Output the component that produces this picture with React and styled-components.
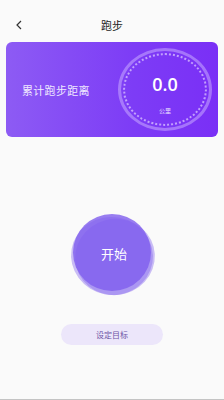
import React from 'react';
import styled, { createGlobalStyle } from 'styled-components';

const GlobalStyle = createGlobalStyle`
  html, body {
    margin: 0;
    padding: 0;
    background: #fafafa;
    font-family: "Noto Sans CJK SC", "Noto Sans", sans-serif;
  }
`;

const Page = styled.div`
  width: 224px;
  height: 399px;
  border-bottom: 1px solid #c4c4c4;
  background: #fafafa;
  display: flex;
  flex-direction: column;
  align-items: center;
`;

const Header = styled.div`
  width: 100%;
  height: 42px;
  display: flex;
  align-items: center;
  justify-content: center;
  position: relative;
`;

const Back = styled.svg`
  position: absolute;
  left: 15px;
  top: 20px;
`;

const Title = styled.div`
  font-size: 11px;
  font-weight: 400;
  color: #222;
  margin-top: 8px;
`;

const Card = styled.div`
  width: 212px;
  height: 95px;
  box-sizing: border-box;
  border-radius: 6px;
  background: linear-gradient(90deg, #8d5bf4 0%, #7d3cf6 60%, #7a2ff6 100%);
  display: flex;
  align-items: center;
  justify-content: space-between;
  padding: 0 6px 0 16px;
`;

const CardLabel = styled.div`
  font-size: 11px;
  color: #efe8ff;
  letter-spacing: 0.3px;
`;

const Dial = styled.div`
  width: 94px;
  height: 83px;
  border-radius: 50%;
  box-sizing: border-box;
  border: 3px solid rgba(200, 170, 255, 0.55);
  display: flex;
  align-items: center;
  justify-content: center;
  position: relative;
`;

const Ticks = styled.div`
  position: absolute;
  inset: 2px;
  border-radius: 50%;
  border: 2px dotted rgba(225, 205, 255, 0.7);
`;

const DialInner = styled.div`
  display: flex;
  flex-direction: column;
  align-items: center;
  padding-top: 9px;
`;

const Value = styled.div`
  font-family: "Open Sans", "Noto Sans", sans-serif;
  font-size: 18px;
  font-weight: 600;
  color: #fff;
  line-height: 20px;
`;

const Unit = styled.div`
  font-size: 6px;
  color: #ece2ff;
  margin-top: 12px;
`;

const StartArea = styled.div`
  margin-top: 76px;
  width: 90px;
  height: 82px;
  position: relative;
  display: flex;
  align-items: center;
  justify-content: center;
`;

const Blob = styled.div`
  position: absolute;
  border-radius: 50%;
  background: rgba(128, 94, 238, ${p => p.$a});
  width: ${p => p.$w}px;
  height: ${p => p.$h}px;
  left: ${p => p.$x}px;
  top: ${p => p.$y}px;
  transform: rotate(${p => p.$r}deg);
`;

const StartText = styled.div`
  position: relative;
  font-size: 13px;
  color: #fff;
  margin-left: 4px;
  margin-top: -2px;
`;

const GoalButton = styled.div`
  margin-top: 29px;
  width: 102px;
  height: 21px;
  border-radius: 11px;
  background: #ece6fa;
  display: flex;
  align-items: center;
  justify-content: center;
  font-size: 8px;
  color: #6f54a6;
`;

export default function App() {
  return (
    <>
      <GlobalStyle />
      <Page>
        <Header>
          <Back width="8" height="10" viewBox="0 0 8 10">
            <path d="M6 1 L2 5 L6 9" fill="none" stroke="#333" strokeWidth="1.2" />
          </Back>
          <Title>跑步</Title>
        </Header>
        <Card>
          <CardLabel>累计跑步距离</CardLabel>
          <Dial>
            <Ticks />
            <DialInner>
              <Value>0.0</Value>
              <Unit>公里</Unit>
            </DialInner>
          </Dial>
        </Card>
        <StartArea>
          <Blob $w={82} $h={78} $x={4} $y={4} $r={10} $a={0.4} />
          <Blob $w={80} $h={76} $x={8} $y={6} $r={-15} $a={0.4} />
          <Blob $w={78} $h={77} $x={6} $y={1} $r={0} $a={0.8} />
          <StartText>开始</StartText>
        </StartArea>
        <GoalButton>设定目标</GoalButton>
      </Page>
    </>
  );
}
